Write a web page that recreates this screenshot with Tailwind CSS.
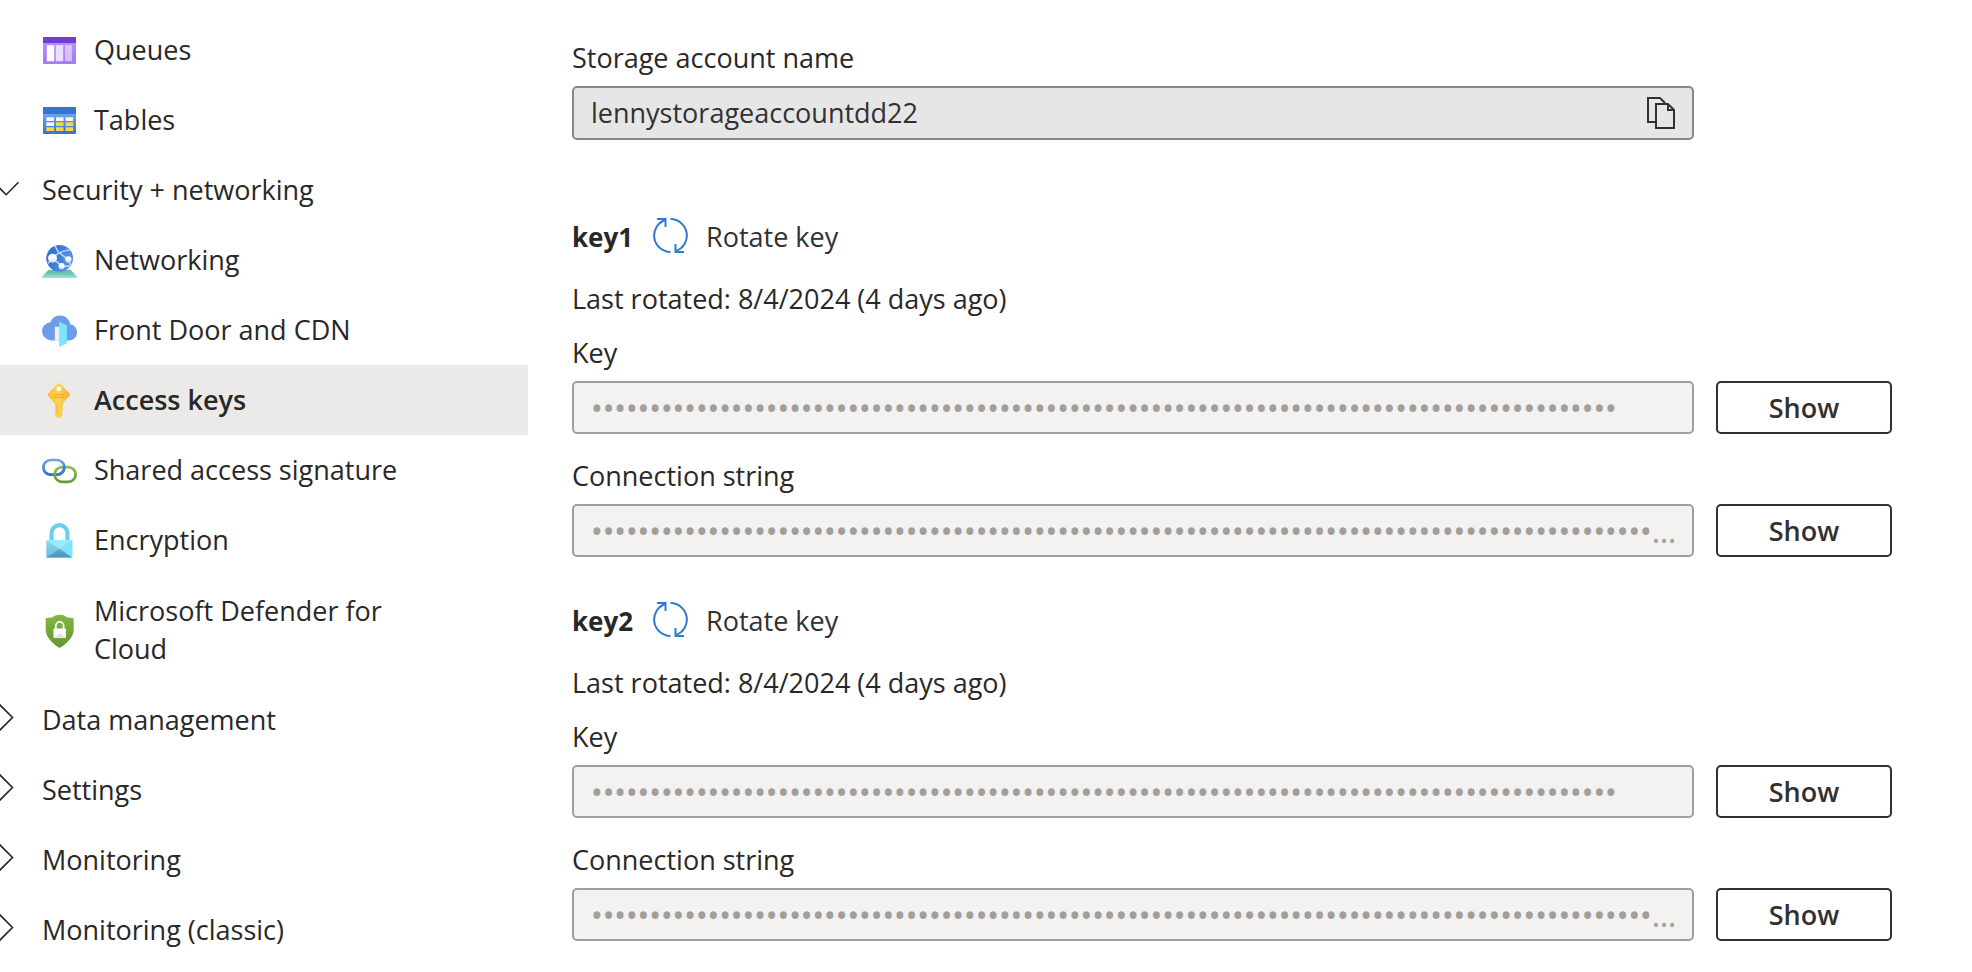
<!DOCTYPE html>
<html lang="en">
<head>
<meta charset="utf-8">
<meta name="viewport" content="width=device-width, initial-scale=1">
<title>Access keys</title>
<script src="https://cdn.jsdelivr.net/npm/@tailwindcss/browser@4"></script>
</head>
<body class="bg-white font-['Open_Sans','Noto_Sans',sans-serif] text-[27px] leading-[38px] text-[#292827]">
<div class="flex min-h-screen">
  <nav aria-label="Storage account" class="w-[528px] shrink-0 pt-[15px]">
    <ul>
      <li><a href="#queues" class="flex h-[70px] items-center gap-[17px] pl-[42px]">
        <svg class="size-[35px] shrink-0" viewBox="0 0 18 18" aria-hidden="true">
          <defs><linearGradient id="q" x1="0" y1="0" x2="0" y2="1"><stop offset="0" stop-color="#b796f9"/><stop offset="1" stop-color="#a67af4"/></linearGradient></defs>
          <rect x=".5" y="2.1" width="17" height="13.8" rx=".5" fill="url(#q)"/>
          <path d="M1 2.1h16a.5.5 0 0 1 .5.5v2.6H.5V2.6a.5.5 0 0 1 .5-.5z" fill="#733cd2"/>
          <path d="M2.5 6.3h3.8v8.2H2.5z" fill="#fff"/><path d="M7.1 6.3h3.8v8.2H7.1z" fill="#fff" opacity=".75"/><path d="M11.8 6.3h3.6v8.2h-3.6z" fill="#fff" opacity=".5"/>
        </svg>
        <span>Queues</span></a></li>
      <li><a href="#tables" class="flex h-[70px] items-center gap-[17px] pl-[42px]">
        <svg class="size-[35px] shrink-0" viewBox="0 0 18 18" aria-hidden="true">
          <defs><linearGradient id="t" x1="0" y1="0" x2="0" y2="1"><stop offset=".2" stop-color="#76a5ee"/><stop offset="1" stop-color="#3275d1"/></linearGradient></defs>
          <rect x=".5" y="2.1" width="17" height="13.8" rx=".5" fill="url(#t)"/>
          <path d="M1 2.1h16a.5.5 0 0 1 .5.5v3.1H.5V2.6a.5.5 0 0 1 .5-.5z" fill="#3177d2"/>
          <path d="M2.2 7.3h4v1.9h-4zM7.2 7.3h3.9v1.9H7.2zM12.1 7.3H16v1.9h-3.9zM2.2 9.9h4v1.9h-4z" fill="#f1f4fb"/>
          <path d="M7.2 9.9h3.9v1.9H7.2zM12.1 9.9H16v1.9h-3.9zM2.2 12.5h4v1.9h-4zM7.2 12.5h3.9v1.9H7.2zM12.1 12.5H16v1.9h-3.9z" fill="#fad545"/>
        </svg>
        <span>Tables</span></a></li>
    </ul>

    <button type="button" aria-expanded="true" class="flex h-[70px] w-full items-center text-left">
      <svg class="h-9 w-[42px] shrink-0" viewBox="0 0 42 36" fill="none" stroke="#292827" stroke-width="1.6" aria-hidden="true"><path d="M-6 10.5 6.2 22.7 18.5 10.3"/></svg>
      <span>Security + networking</span></button>
    <ul>
      <li><a href="#networking" class="flex h-[70px] items-center gap-[17px] pl-[42px]">
        <svg class="size-[35px] shrink-0" viewBox="0 0 18 18" aria-hidden="true">
          <defs>
            <linearGradient id="n1" x1="0" y1="0" x2="0" y2="1"><stop offset=".4" stop-color="#66bfb0"/><stop offset="1" stop-color="#95ecd0"/></linearGradient>
            <linearGradient id="n2" x1="0" y1="0" x2="1" y2=".5"><stop offset=".3" stop-color="#2f74cf"/><stop offset="1" stop-color="#5a95e8"/></linearGradient>
            <linearGradient id="n3" x1="0" y1="0" x2="0" y2="1"><stop offset=".4" stop-color="#fff"/><stop offset="1" stop-color="#d8dde6"/></linearGradient>
            <clipPath id="nc"><circle cx="9.1" cy="7.9" r="6.9"/></clipPath>
          </defs>
          <path d="M3.4 13.7h11.3l3.2 3.5c.2.3.1.8-.3.8H.4c-.4 0-.5-.5-.3-.8z" fill="url(#n1)"/>
          <circle cx="9.1" cy="7.9" r="6.9" fill="url(#n2)"/>
          <g clip-path="url(#nc)" stroke="#bcd4f7" stroke-width=".8" fill="none"><path d="M6.6 1.2 8.2 4.4 13.5 8.7M5.4 7.8Q9 3.8 15.4 3.5M5.4 7.8l4.7 4M13.5 8.7l1.7 3.3M3 10.5l2.4-2.7M10.1 12l5.4-.1"/></g>
          <circle cx="5.4" cy="7.8" r="2.3" fill="url(#n3)"/><circle cx="13.5" cy="8.4" r="1.6" fill="url(#n3)"/><circle cx="10.1" cy="11.9" r="1.55" fill="url(#n3)"/>
        </svg>
        <span>Networking</span></a></li>
      <li><a href="#cdn" class="flex h-[70px] items-center gap-[17px] pl-[42px]">
        <svg class="size-[35px] shrink-0" viewBox="0 0 18 18" aria-hidden="true">
          <path d="M18 9.7a4 4 0 0 0-3.5-3.9A5.1 5.1 0 0 0 9.3 1.3 5.3 5.3 0 0 0 4.3 4.7 4.8 4.8 0 0 0 0 9.4a4.9 4.9 0 0 0 5 4.7h9a4.1 4.1 0 0 0 4-4.4z" fill="#6c9de9"/>
          <path d="M6.6 7.1h2.6v7.1H6.6z" fill="#eef0f5"/><path d="m8.8 4.5 4 1.8v9.3l-4 1.9z" fill="#7fe3fd"/>
        </svg>
        <span>Front Door and CDN</span></a></li>
      <li><a href="#access-keys" aria-current="page" class="flex h-[70px] items-center gap-[17px] bg-[#ebeae8] pl-[42px] font-semibold">
        <svg class="size-[35px] shrink-0" viewBox="0 0 18 18" aria-hidden="true">
          <defs><linearGradient id="k"><stop offset="0" stop-color="#f9b93c"/><stop offset=".45" stop-color="#fdd74b"/><stop offset="1" stop-color="#f5ae3e"/></linearGradient></defs>
          <path d="M13.9 7a1.2 1.2 0 0 0 0-1.800L9.600.7a1.200 1.200 0 0 0-1.800 0L3.400 5.200a1.200 1.200 0 0 0 0 1.800l2.900 3.400c.3.3.5.6.5 1v5c0 .3.1.5.3.7l1.200 1c.2.2.5.2.7 0l1-1 .8-.8-.7-.7.7-.8-.6-.7.6-.8v-.6l-.5-.8.6-.8v-.7c0-.3.2-.6.4-.8z" fill="url(#k)"/>
          <circle cx="8.7" cy="3" r="1.2" fill="#fff"/>
          <path d="M6 5.8h5.500v.5H6zM6 7.100h5.500v.5H6z" fill="#ec9a3a"/><path d="M7.600 11.100h.4v5.300l-.4-.3z" fill="#ec9a3a"/>
        </svg>
        <span>Access keys</span></a></li>
      <li><a href="#sas" class="flex h-[70px] items-center gap-[17px] pl-[42px]">
        <svg class="size-[35px] shrink-0" viewBox="0 0 18 18" fill="none" stroke-width="1.4" aria-hidden="true">
          <defs>
            <linearGradient id="s1" x1="0" y1="0" x2="0" y2="1"><stop offset="0" stop-color="#6ca2ef"/><stop offset="1" stop-color="#2d70ce"/></linearGradient>
            <linearGradient id="s2" x1="0" y1="0" x2="0" y2="1"><stop offset="0" stop-color="#8cbf4b"/><stop offset="1" stop-color="#6a9a38"/></linearGradient>
          </defs>
          <rect x=".7" y="3.6" width="10.8" height="7.5" rx="3.75" stroke="url(#s1)"/>
          <rect x="6.5" y="7.3" width="10.8" height="7.5" rx="3.75" stroke="url(#s2)"/>
          <path d="M11.4 6.6a3.75 3.75 0 0 1-2.600 4.300" stroke="#3f80da"/>
        </svg>
        <span>Shared access signature</span></a></li>
      <li><a href="#encryption" class="flex h-[70px] items-center gap-[17px] pl-[42px]">
        <svg class="size-[35px] shrink-0" viewBox="0 0 18 18" aria-hidden="true">
          <defs><linearGradient id="e" x1="0" y1="0" x2="0" y2="1"><stop offset="0" stop-color="#5faed2"/><stop offset="1" stop-color="#4895c0"/></linearGradient>
          <linearGradient id="e2" x1="0" y1="0" x2="0" y2="1"><stop offset="0" stop-color="#8bd8ee"/><stop offset="1" stop-color="#6fb9d9"/></linearGradient></defs>
          <path d="M4.900 9.200V5.200a4.100 4.100 0 0 1 8.200 0v4" fill="none" stroke="#68d0f1" stroke-width="2.1"/>
          <rect x="2.3" y="8.7" width="13.4" height="9.2" rx=".5" fill="#7fe3fd"/>
          <path d="M2.300 9.200v8.200c0 .3.2.5.5.5L9 13.300z" fill="url(#e2)"/>
          <path d="M2.500 8.800h13L9 13.400z" fill="#98ebfd"/>
          <path d="M2.500 17.800h13L9 13.200z" fill="url(#e)"/>
        </svg>
        <span>Encryption</span></a></li>
      <li><a href="#defender" class="flex min-h-[110px] items-center gap-[17px] pr-[100px] pl-[42px]">
        <svg class="size-[35px] shrink-0" viewBox="0 0 18 18" aria-hidden="true">
          <defs><linearGradient id="d" x1="0" y1="0" x2="0" y2="1"><stop offset="0" stop-color="#82b740"/><stop offset="1" stop-color="#689537"/></linearGradient></defs>
          <path d="M16.300 8.700c0 4.600-5.600 8.300-6.800 9a.7.7 0 0 1-.8 0c-1.200-.7-6.800-4.400-6.800-9V3.100c0-.3.2-.5.5-.5C6.900 2.500 5.800.9 9.100.9s2.300 1.600 6.700 1.700c.3 0 .5.2.5.5z" fill="url(#d)"/>
          <path d="M7.100 8.300V6.600a2 2 0 0 1 4 0v1.700" fill="none" stroke="#fff" stroke-width=".9"/>
          <rect x="5.9" y="8" width="6.4" height="4.8" rx=".3" fill="#fff"/><path d="M6 12.700 9.100 10.600l3.100 2.100z" fill="#e2e2e2"/>
        </svg>
        <span>Microsoft Defender for Cloud</span></a></li>
    </ul>

    <button type="button" aria-expanded="false" class="flex h-[70px] w-full items-center text-left">
      <svg class="h-9 w-[42px] shrink-0" viewBox="0 0 42 36" fill="none" stroke="#292827" stroke-width="1.6" aria-hidden="true"><path d="M-1 2 12.500 15.500-1 29"/></svg>
      <span>Data management</span></button>
    <button type="button" aria-expanded="false" class="flex h-[70px] w-full items-center text-left">
      <svg class="h-9 w-[42px] shrink-0" viewBox="0 0 42 36" fill="none" stroke="#292827" stroke-width="1.6" aria-hidden="true"><path d="M-1 2 12.500 15.500-1 29"/></svg>
      <span>Settings</span></button>
    <button type="button" aria-expanded="false" class="flex h-[70px] w-full items-center text-left">
      <svg class="h-9 w-[42px] shrink-0" viewBox="0 0 42 36" fill="none" stroke="#292827" stroke-width="1.6" aria-hidden="true"><path d="M-1 2 12.500 15.500-1 29"/></svg>
      <span>Monitoring</span></button>
    <button type="button" aria-expanded="false" class="flex h-[70px] w-full items-center text-left">
      <svg class="h-9 w-[42px] shrink-0" viewBox="0 0 42 36" fill="none" stroke="#292827" stroke-width="1.6" aria-hidden="true"><path d="M-1 2 12.500 15.500-1 29"/></svg>
      <span>Monitoring (classic)</span></button>
  </nav>

  <main class="min-w-0 flex-1 pt-[39px] pr-20 pl-11">
    <div class="grid grid-cols-[minmax(0,1fr)_176px] gap-x-[22px]">
      <label for="account" class="col-span-2 mb-[9px]">Storage account name</label>
      <div class="flex h-[54px] items-center rounded-[5px] border-2 border-[#8a8886] bg-[#e6e6e6] pr-4 pl-[17px]">
        <input id="account" type="text" readonly value="lennystorageaccountdd22" class="min-w-0 flex-1 text-[#323130] outline-none">
        <button type="button" aria-label="Copy to clipboard">
          <svg class="h-8 w-[30px]" viewBox="0 0 30 32" fill="none" stroke="#323130" stroke-width="2" aria-hidden="true"><path d="M10 25H2V1h12l5 5M10 7h12l6 6v18H10zM22 7v6h6"/></svg>
        </button>
      </div>
    </div>

    <section class="mt-[78px]">
      <div class="flex h-[38px] items-center gap-[18px]">
        <h2 class="w-[63px] text-[26px] font-bold">key1</h2>
        <button type="button" class="flex items-start gap-[18px] text-[#323130]">
          <svg class="size-[35px]" viewBox="0 0 35 35" fill="none" stroke="#2f7ad6" stroke-width="2" aria-hidden="true"><path d="M17.500 34A16.500 16.500 0 0 1 12 2M4 1h8.500v8M17.500 1A16.500 16.500 0 0 1 23 33M31 34h-8.500v-8"/></svg>
          <span>Rotate key</span></button>
      </div>
      <p class="mt-6">Last rotated: 8/4/2024 (4 days ago)</p>
      <div class="mt-4 grid grid-cols-[minmax(0,1fr)_176px] gap-x-[22px]">
        <label for="key1" class="col-span-2 mb-[9px]">Key</label>
        <input id="key1" type="password" readonly value="kkkkkkkkkkkkkkkkkkkkkkkkkkkkkkkkkkkkkkkkkkkkkkkkkkkkkkkkkkkkkkkkkkkkkkkkkkkkkkkkkkkkkkkk" class="h-[53px] min-w-0 rounded-[5px] border-2 border-[#a19f9d] bg-[#f3f2f1] pr-3 pl-[17px] font-['Noto_Sans',sans-serif] text-[31px] text-ellipsis text-[#a19f9d]">
        <button type="button" class="h-[53px] rounded-[5px] border-2 border-[#323130] font-semibold text-[#323130]">Show</button>
        <label for="conn1" class="col-span-2 mt-[23px] mb-[9px]">Connection string</label>
        <input id="conn1" type="password" readonly value="cccccccccccccccccccccccccccccccccccccccccccccccccccccccccccccccccccccccccccccccccccccccccccccccccccccccccccccccccccccccc" class="h-[53px] min-w-0 rounded-[5px] border-2 border-[#a19f9d] bg-[#f3f2f1] pr-3 pl-[17px] font-['Noto_Sans',sans-serif] text-[31px] text-ellipsis text-[#a19f9d]">
        <button type="button" class="h-[53px] rounded-[5px] border-2 border-[#323130] font-semibold text-[#323130]">Show</button>
      </div>
    </section>

    <section class="mt-[45px]">
      <div class="flex h-[38px] items-center gap-[18px]">
        <h2 class="w-[63px] text-[26px] font-bold">key2</h2>
        <button type="button" class="flex items-start gap-[18px] text-[#323130]">
          <svg class="size-[35px]" viewBox="0 0 35 35" fill="none" stroke="#2f7ad6" stroke-width="2" aria-hidden="true"><path d="M17.500 34A16.500 16.500 0 0 1 12 2M4 1h8.500v8M17.500 1A16.500 16.500 0 0 1 23 33M31 34h-8.500v-8"/></svg>
          <span>Rotate key</span></button>
      </div>
      <p class="mt-6">Last rotated: 8/4/2024 (4 days ago)</p>
      <div class="mt-4 grid grid-cols-[minmax(0,1fr)_176px] gap-x-[22px]">
        <label for="key2" class="col-span-2 mb-[9px]">Key</label>
        <input id="key2" type="password" readonly value="kkkkkkkkkkkkkkkkkkkkkkkkkkkkkkkkkkkkkkkkkkkkkkkkkkkkkkkkkkkkkkkkkkkkkkkkkkkkkkkkkkkkkkkk" class="h-[53px] min-w-0 rounded-[5px] border-2 border-[#a19f9d] bg-[#f3f2f1] pr-3 pl-[17px] font-['Noto_Sans',sans-serif] text-[31px] text-ellipsis text-[#a19f9d]">
        <button type="button" class="h-[53px] rounded-[5px] border-2 border-[#323130] font-semibold text-[#323130]">Show</button>
        <label for="conn2" class="col-span-2 mt-[23px] mb-[9px]">Connection string</label>
        <input id="conn2" type="password" readonly value="cccccccccccccccccccccccccccccccccccccccccccccccccccccccccccccccccccccccccccccccccccccccccccccccccccccccccccccccccccccccc" class="h-[53px] min-w-0 rounded-[5px] border-2 border-[#a19f9d] bg-[#f3f2f1] pr-3 pl-[17px] font-['Noto_Sans',sans-serif] text-[31px] text-ellipsis text-[#a19f9d]">
        <button type="button" class="h-[53px] rounded-[5px] border-2 border-[#323130] font-semibold text-[#323130]">Show</button>
      </div>
    </section>
  </main>
</div>
</body>
</html>
